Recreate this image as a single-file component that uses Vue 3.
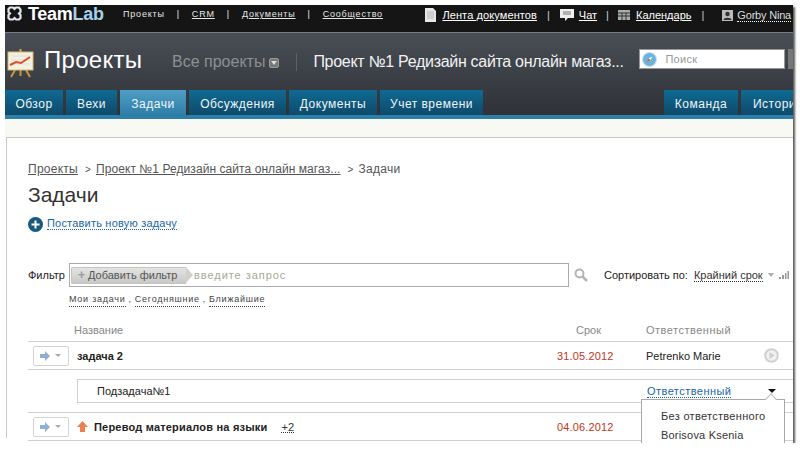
<script setup>
const topLinks = [
  { t: 'Проекты', c: 'tl first plain' },
  { t: 'CRM', c: 'tl' },
  { t: 'Документы', c: 'tl' },
  { t: 'Сообщество', c: 'tl' }
]
const tabs = [
  { t: 'Обзор', w: 58 },
  { t: 'Вехи', w: 51 },
  { t: 'Задачи', w: 66, active: true },
  { t: 'Обсуждения', w: 97 },
  { t: 'Документы', w: 88 },
  { t: 'Учет времени', w: 103 }
]
const rightTabs = [
  { t: 'Команда', w: 74 },
  { t: 'История', w: 74 }
]
const quick = ['Мои задачи', 'Сегодняшние', 'Ближайшие']
</script>

<template>
  <div class="window">
    <div class="topbar">
      <svg class="logo" width="15" height="15" viewBox="0 0 15 15">
        <path d="M3 1.500h3l1.500 1.500L9 1.500h3l1.500 2v2.500L12 7.500l1.500 1.500v3L12 13.500H9L7.500 12 6 13.500H3L1.500 12V9L3 7.500 1.500 6V3z" fill="none" stroke="#dfe6ee" stroke-width="2.200" />
      </svg>
      <span class="brand">Team<b>Lab</b></span>
      <div class="tlinks">
        <template v-for="(l, i) in topLinks" :key="l.t">
          <span v-if="i" class="sep">|</span>
          <a :class="l.c">{{ l.t }}</a>
        </template>
      </div>
      <div class="tright">
        <svg width="11" height="14" viewBox="0 0 11 14"><path d="M0 0h8l3 3v11H0z" fill="#e6e6e6" /><path d="M2 4h7M2 6h7M2 8h7M2 10h7" stroke="#aaa" stroke-width=".8" /></svg>
        <a class="rl r1">Лента документов</a>
        <span class="sep s1">|</span>
        <svg class="ic2" width="14" height="13" viewBox="0 0 14 13"><path d="M0 0h14v9H8l-3 3V9H0z" fill="#eee" /><path d="M3 3h8M3 5h8" stroke="#777" stroke-width="1" /></svg>
        <a class="rl r2">Чат</a>
        <span class="sep s1 s2">|</span>
        <svg class="ic2" width="12" height="10" viewBox="0 0 12 10"><rect width="12" height="10" fill="#aaa" /><path d="M0 3h12M0 6h12M4 3v7M8 3v7" stroke="#333" stroke-width="1" /></svg>
        <a class="rl r3">Календарь</a>
        <span class="sep s1">|</span>
        <svg class="ic3" width="11" height="11" viewBox="0 0 11 11"><rect width="11" height="11" fill="#bbb" /><circle cx="5.500" cy="4" r="2.200" fill="#333" /><path d="M1.500 10c0-3 8-3 8 0z" fill="#333" /></svg>
        <a class="user">Gorby Nina</a>
      </div>
    </div>

    <div class="header">
      <div class="headrow">
        <svg class="chart" width="27" height="29" viewBox="0 0 27 29">
          <path d="M13.500 0v4" stroke="#d6a84a" stroke-width="2" />
          <path d="M8 21L4 28M19 21l4 7M13.500 21v6" stroke="#c8963a" stroke-width="2" fill="none" />
          <rect x="1" y="3" width="25" height="18" fill="#f4f1e2" stroke="#d8b870" />
          <path d="M4 7h19M4 11h19M4 15h19" stroke="#d7d7c8" stroke-width=".7" />
          <path d="M3 16l6-3 5 1 9-6" stroke="#d8502a" stroke-width="2" fill="none" />
        </svg>
        <h1>Проекты</h1>
        <span class="allp">Все проекты</span>
        <span class="allicon"><i></i></span>
        <span class="vsep"></span>
        <span class="pname">Проект №1 Редизайн сайта онлайн магаз...</span>
        <div class="search">
          <svg width="15" height="15" viewBox="0 0 15 15"><circle cx="7.500" cy="7.500" r="7" fill="#6db4dc" stroke="#cfe4ef" /><path d="M10.500 4.500L8.500 8 6.500 6.500z" fill="#fff" /><path d="M4.500 10.500L6.500 6.500 8.500 8z" fill="#e2603a" /></svg>
          <span>Поиск</span>
        </div>
        <span class="sbtn"></span>
      </div>
      <div class="tabs">
        <a v-for="t in tabs" :key="t.t" class="tab" :class="{ active: t.active }" :style="{ width: t.w + 'px' }">{{ t.t }}</a>
        <span class="spring"></span>
        <a v-for="t in rightTabs" :key="t.t" class="tab" :style="{ width: t.w + 'px' }">{{ t.t }}</a>
      </div>
    </div>
    <div class="bluebar"></div>
    <div class="cream"></div>

    <div class="card">
      <div class="crumbs">
        <a>Проекты</a><span class="gt">&gt;</span><a class="long">Проект №1 Редизайн сайта онлайн магаз...</a><span class="gt">&gt;</span><span>Задачи</span>
      </div>
      <h2>Задачи</h2>
      <div class="addrow">
        <svg width="15" height="15" viewBox="0 0 15 15"><circle cx="7.500" cy="7.500" r="7.500" fill="#175a7e" /><path d="M7.500 3.500v8M3.500 7.500h8" stroke="#fff" stroke-width="2" /></svg>
        <a class="addlink">Поставить новую задачу</a>
      </div>

      <div class="filter">
        <span class="flabel">Фильтр</span>
        <div class="fbox">
          <span class="fadd"><b>+</b>Добавить фильтр</span>
          <span class="fhint">введите запрос</span>
        </div>
        <svg class="mag" width="14" height="14" viewBox="0 0 14 14"><circle cx="5.500" cy="5.500" r="4" fill="none" stroke="#b4b4b0" stroke-width="2" /><path d="M8.500 8.500L13 13" stroke="#b4b4b0" stroke-width="2.500" /></svg>
        <span class="slabel">Сортировать по:</span>
        <a class="sval">Крайний срок</a>
        <i class="sarrow"></i>
        <svg class="bars" width="10" height="8" viewBox="0 0 10 8"><path d="M0 6h2v2H0zM3 4h2v4H3zM6 2h1.500v6H6zM8.500 0H10v8H8.500z" fill="#999" /></svg>
      </div>
      <div class="quick">
        <template v-for="(q, i) in quick" :key="q">
          <span v-if="i" class="comma">,</span>
          <a>{{ q }}</a>
        </template>
      </div>

      <div class="thead">
        <span class="cname">Название</span>
        <span class="cdate">Срок</span>
        <span class="cresp">Ответственный</span>
      </div>

      <div class="row">
        <span class="abtn">
          <svg width="10" height="10" viewBox="0 0 10 10"><path d="M0 3h5V0l5 5-5 5V7H0z" fill="#8fb0d2" /></svg>
          <i class="dn"></i>
        </span>
        <span class="cname title cut">задача 2</span>
        <span class="cdate red">31.05.2012</span>
        <span class="cresp dark">Petrenko Marie</span>
        <svg class="play" width="15" height="15" viewBox="0 0 15 15"><circle cx="7.500" cy="7.500" r="6.300" fill="#f1f1f1" stroke="#d0d0d0" stroke-width="2" /><path d="M5.500 4l5 3.500-5 3.500z" fill="#cfcfcf" /></svg>
      </div>

      <div class="subwrap">
        <div class="sub">
          <span class="subname">Подзадача№1</span>
          <a class="assign">Ответственный</a>
          <i class="blk"></i>
        </div>
      </div>

      <div class="row">
        <span class="abtn">
          <svg width="10" height="10" viewBox="0 0 10 10"><path d="M0 3h5V0l5 5-5 5V7H0z" fill="#8fb0d2" /></svg>
          <i class="dn"></i>
        </span>
        <svg class="up" width="11" height="11" viewBox="0 0 11 11"><path d="M5.500 0L11 6H8v5H3V6H0z" fill="#ee7f50" /></svg>
        <span class="cname title big">Перевод материалов на языки</span>
        <a class="plus">+2</a>
        <span class="cdate red">04.06.2012</span>
        <span class="cresp"></span>
      </div>

      <div class="menu">
        <span class="notch"></span>
        <div class="mi m1">Без ответственного</div>
        <div class="mi m2">Borisova Ksenia</div>
      </div>
    </div>
  </div>
</template>

<style>
html, body { margin: 0; background: #fff; overflow: hidden; }
</style>

<style scoped>
.window {
  width: 788px; height: 438px; margin: 5px 0 0 5px; position: relative;
  box-shadow: 2px 2px 2px #5a5a5a; overflow: hidden; background: #fff;
  font-family: "Liberation Sans", Arial, sans-serif; font-size: 11px; color: #333;
}
a { cursor: pointer; }
.topbar { height: 27px; background: #151515; border-bottom: 1px solid #7b7b7b; display: flex; align-items: center; color: #eee; }
.logo { margin: -10px 0 0 2px; }
.brand { font-size: 18px; font-weight: 700; line-height: 20px; color: #fff; margin: -9px 0 0 6px; letter-spacing: -0.3px; width: 95px; }
.brand b { color: #a5d0ee; }
.tlinks { display: flex; align-items: center; font-size: 9px; letter-spacing: .8px; margin-top: -9px; }
.tl { text-decoration: underline; color: #e6e6e6; }
.plain { text-decoration: none; }
.tlinks .sep { margin: 0 12px; }
.tright { margin-left: auto; display: flex; align-items: center; font-size: 11px; margin-top: -7px; margin-right: 2px; }
.tright .rl { text-decoration: underline; color: #fff; margin-left: 6px; }
.tright .r1 { letter-spacing: .1px; }
.tright .r2 { margin-left: 5px; }
.tright .s1 { margin: 0 10px; color: #ccc; }
.tright .s2 { margin: 0 9px; }
.ic3 { margin-left: 8px; margin-right: 4px; }
.user { border-bottom: 1px dotted #fff; color: #ddd; letter-spacing: -.2px; }

.header { height: 82px; background: linear-gradient(#494d55, #2f3338); display: flex; flex-direction: column; }
.headrow { height: 57px; display: flex; align-items: center; position: relative; color: #fff; white-space: nowrap; }
.chart { margin: 4px 0 0 2px; flex: none; }
h1 { font-size: 24px; font-weight: 400; margin: -3px 0 0 10px; width: 128px; letter-spacing: .3px; flex: none; }
.allp { font-size: 16px; color: #8d9093; margin-top: 1px; }
.allicon { width: 10px; height: 10px; margin: 2px 0 0 4px; background: #777; border: 1px solid #999; box-sizing: border-box; display: flex; align-items: center; justify-content: center; border-radius: 2px; flex: none; }
.allicon i { border: 3px solid transparent; border-top: 4px solid #ddd; border-bottom: 0; }
.vsep { width: 1px; height: 18px; background: #5d6066; margin: 0 16px 0 17px; flex: none; }
.pname { font-size: 16px; color: #f2f2f2; margin-top: 0; width: 326px; letter-spacing: -.3px; flex: none; }
.search { width: 146px; height: 20px; box-sizing: border-box; background: #fff; border: 1px solid #999; display: flex; align-items: center; margin-top: -5px; color: #999; font-size: 11px; flex: none; }
.search svg { margin-left: 2px; }
.search span { margin-left: 8px; letter-spacing: .3px; }
.sbtn { width: 8px; height: 20px; margin: -5px 0 0 3px; background: #777; flex: none; }

.tabs { display: flex; gap: 3px; height: 25px; }
.spring { flex: none; width: 175px; }
.tab { flex: none; box-sizing: border-box; padding-top: 2px; background: linear-gradient(#0f6a91, #0e4a6b); color: #eef5f8; font-size: 12px; letter-spacing: .5px; display: flex; align-items: center; justify-content: center; white-space: nowrap; overflow: hidden; }
.tab.active { background: linear-gradient(#4f9dc5, #2e7fa8); }
.bluebar { height: 4px; background: #2e7fa8; }
.cream { height: 18px; background: #f9f9f4; }

.card { height: 301px; margin-left: 1px; border-top: 1px solid #c9c9c1; border-left: 1px solid #c9c9c1; padding: 24px 0 0 21px; box-sizing: border-box; position: relative; }
.crumbs { font-size: 12px; color: #555; display: flex; height: 14px; align-items: center; letter-spacing: .25px; white-space: nowrap; }
.crumbs a { text-decoration: underline; }
.crumbs .long { letter-spacing: .07px; }
.gt { margin: 0 5px 0 7px; font-size: 10px; }
h2 { margin: 7px 0 0; font-size: 21px; font-weight: 400; line-height: 24px; color: #333; }
.addrow { display: flex; align-items: center; margin-top: 9px; height: 16px; }
.addlink { color: #1a66a8; font-size: 11px; letter-spacing: .2px; border-bottom: 1px dotted #1a66a8; margin: -2px 0 0 4px; }

.filter { display: flex; align-items: center; height: 24px; margin-top: 31px; color: #222; }
.flabel { width: 41px; font-size: 11px; }
.fbox { width: 500px; height: 24px; box-sizing: border-box; border: 1px solid #aaa; display: flex; align-items: center; padding-left: 1px; }
.fadd { height: 17px; width: 115px; box-sizing: border-box; background: linear-gradient(#e4e4e2, #c8c8c6); border: 1px solid #c4c4c2; border-right: 0; border-radius: 2px 0 0 2px; font-size: 11px; color: #555; display: flex; align-items: center; position: relative; padding-left: 6px; margin-right: 8px; }
.fadd::after { content: ""; position: absolute; right: -7px; top: -1px; border-left: 7px solid #d0d0ce; border-top: 8.500px solid transparent; border-bottom: 8.500px solid transparent; }
.fadd b { color: #999; font-weight: 700; font-size: 12px; margin-right: 3px; }
.fhint { color: #a8a89a; letter-spacing: .95px; font-size: 11px; }
.mag { margin-left: 5px; }
.slabel { margin-left: 16px; font-size: 11px; color: #222; }
.sval { margin-left: 6px; font-size: 11px; border-bottom: 1px dotted #333; color: #333; }
.sarrow { margin-left: 5px; border: 3px solid transparent; border-top: 4px solid #aaa; border-bottom: 0; }
.bars { margin-left: 5px; }
.quick { display: flex; margin: 7px 0 0 41px; font-size: 9px; letter-spacing: .75px; color: #444; height: 14px; }
.quick a { border-bottom: 1px dotted #444; height: 12px; }
.comma { margin: 0 3px; }

.cdate { margin-left: auto; margin-right: 34px; width: 55px; flex: none; text-align: right; }
.cresp { width: 147px; flex: none; }
.thead { display: flex; margin-top: 14px; height: 16px; color: #888; font-size: 11px; padding-left: 46px; align-items: center; border-bottom: 1px solid #d0d0d0; padding-bottom: 3px; }
.thead .cname { flex: none; }
.thead .cdate { width: 24px; margin-right: 46px; }
.thead .cresp { letter-spacing: .5px; }
.row { height: 27px; border-bottom: 1px solid #d0d0d0; display: flex; align-items: center; position: relative; }
.abtn { margin-left: 5px; width: 36px; height: 20px; box-sizing: border-box; border: 1px solid #d4d4d4; border-radius: 2px; display: flex; align-items: center; padding-left: 6px; flex: none; }
.dn { margin-left: 5px; border: 3px solid transparent; border-top: 3px solid #aaa; border-bottom: 0; }
.title { font-weight: 700; color: #222; font-size: 11px; }
.cut { margin-left: 8px; }
.red { color: #c8351a; font-size: 11px; letter-spacing: .15px; }
.dark { color: #222; font-size: 11px; }
.play { position: absolute; left: 736px; top: 6px; }
.subwrap { height: 43px; border-bottom: 1px solid #d0d0d0; box-sizing: border-box; padding-top: 9px; }
.sub { margin-left: 49px; height: 24px; box-sizing: border-box; border: 1px solid #d0d0d0; border-right: 0; display: flex; align-items: center; font-size: 11px; color: #222; padding-left: 19px; }
.subname { width: 550px; }
.assign { color: #1a66a8; letter-spacing: .45px; border-bottom: 1px dotted #1a66a8; }
.blk { margin-left: 37px; border: 4px solid transparent; border-top: 4px solid #111; border-bottom: 0; }
.up { margin-left: 8px; flex: none; }
.big { font-size: 11px; margin-left: 6px; letter-spacing: .2px; white-space: nowrap; }
.plus { margin-left: 14px; font-size: 11px; text-decoration: underline dotted; }
.menu { position: absolute; left: 634px; top: 261px; width: 144px; height: 60px; box-sizing: border-box; background: #fff; border: 1px solid #a8a8a8; font-size: 11px; color: #333; }
.notch { position: absolute; left: 125px; top: -5px; width: 7px; height: 7px; background: #fff; border-left: 1px solid #bbb; border-top: 1px solid #bbb; transform: rotate(45deg); }
.mi { position: absolute; white-space: nowrap; }
.m1 { left: 19px; top: 10px; letter-spacing: .3px; }
.m2 { left: 19px; top: 29px; letter-spacing: .2px; }
</style>
